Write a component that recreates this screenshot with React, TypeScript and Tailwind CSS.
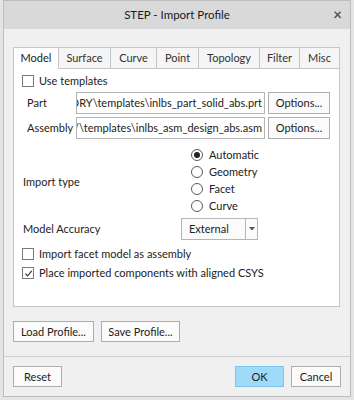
import React from 'react';

const tabs = ['Model', 'Surface', 'Curve', 'Point', 'Topology', 'Filter', 'Misc'];
const tabWidths = ['w-[46px]', 'w-[52px]', 'w-[46px]', 'w-[42px]', 'w-[61px]', 'w-[40px]', 'w-[40px]'];

const Checkbox = ({ checked }: { checked?: boolean }) => (
  <span className="w-[12px] h-[12px] border border-[#7a7a7a] bg-white flex items-center justify-center shrink-0">
    {checked && (
      <svg viewBox="0 0 10 10" className="w-[9px] h-[9px]">
        <path d="M1.5 5.2 L4 7.6 L8.6 2.2" fill="none" stroke="#333" strokeWidth="1.3" />
      </svg>
    )}
  </span>
);

const Radio = ({ checked }: { checked?: boolean }) => (
  <span className="w-[12px] h-[12px] rounded-full border border-[#5a5a5a] bg-white flex items-center justify-center shrink-0">
    {checked && <span className="w-[6px] h-[6px] rounded-full bg-[#222]" />}
  </span>
);

const Button = ({ children, className = '' }: { children: React.ReactNode; className?: string }) => (
  <div
    className={`h-[21px] shrink-0 border border-[#adadad] bg-[#fbfbfb] flex items-center justify-center text-[#222] ${className}`}
  >
    {children}
  </div>
);

export default function App() {
  return (
    <div
      className="w-[354px] h-[400px] bg-[#e4e4e4] pl-[3px] pr-[3px] text-[11px] leading-[14px] text-[#222]"
      style={{ fontFamily: 'Lato, "Open Sans", sans-serif' }}
    >
      <div className="w-[348px] h-[397px] border border-[#bdbdbd] bg-[#f0f0f0] flex flex-col">
        {/* title bar */}
        <div className="h-[28px] bg-[#d9d9d9] relative flex items-center justify-center text-[11.5px] text-[#1a1a1a]">
          <span>STEP - Import Profile</span>
          <span className="absolute right-[8px] top-[6px] text-[15px] text-[#555] font-bold">×</span>
        </div>

        <div className="flex-1 px-[9px] pt-[17px] flex flex-col">
          {/* tabs */}
          <div className="flex items-end h-[22px]">
            {tabs.map((t, i) => (
              <div
                key={t}
                className={`${tabWidths[i]} flex items-center justify-center ${
                  i === 0
                    ? 'h-[22px] bg-white border border-b-0 border-[#c6c6c6] relative z-10 -mb-px pb-px'
                    : 'h-[21px] bg-[#f5f5f5] border border-l-0 border-[#c6c6c6] border-b-0 text-[#333]'
                }`}
              >
                {t}
              </div>
            ))}
          </div>
          {/* panel */}
          <div className="w-[327px] h-[239px] bg-white border border-[#c6c6c6] px-[8px] pt-[5px] flex flex-col">
            <div className="flex items-center gap-[5px] h-[14px]">
              <Checkbox />
              <span>Use templates</span>
            </div>
            <div className="flex items-center pl-[5px] h-[22px] mt-[4px]">
              <span className="w-[49px] shrink-0">Part</span>
              <div className="w-[189px] shrink-0 h-[22px] border border-[#b5b5b5] bg-white flex items-center justify-end overflow-hidden whitespace-nowrap pr-[2px]">
                <span>ORY\templates\inlbs_part_solid_abs.prt</span>
              </div>
              <Button className="w-[62px] ml-[3px] h-[22px]">Options...</Button>
            </div>
            <div className="flex items-center pl-[5px] h-[22px] mt-[3px]">
              <span className="w-[49px] shrink-0">Assembly</span>
              <div className="w-[189px] shrink-0 h-[22px] border border-[#b5b5b5] bg-white flex items-center justify-end overflow-hidden whitespace-nowrap pr-[2px]">
                <span>/\templates\inlbs_asm_design_abs.asm</span>
              </div>
              <Button className="w-[62px] ml-[3px] h-[22px]">Options...</Button>
            </div>
            <div className="flex items-center mt-[9px]">
              <span className="w-[169px] pt-[2px] pl-[1px]">Import type</span>
              <div className="flex flex-col gap-[3px]">
                {['Automatic', 'Geometry', 'Facet', 'Curve'].map((r, i) => (
                  <div key={r} className="flex items-center gap-[6px] h-[14px]">
                    <Radio checked={i === 0} />
                    <span>{r}</span>
                  </div>
                ))}
              </div>
            </div>
            <div className="flex items-center mt-[5px] h-[22px]">
              <span className="w-[159px] pl-[1px]">Model Accuracy</span>
              <div className="w-[77px] h-[22px] border border-[#b5b5b5] bg-[#fbfbfb] flex">
                <span className="flex-1 pl-[7px] flex items-center">External</span>
                <span className="w-[12px] border-l border-[#b5b5b5] flex items-center justify-center">
                  <svg viewBox="0 0 6 4" className="w-[6px] h-[4px]">
                    <path d="M0 0 L6 0 L3 3.5 Z" fill="#555" />
                  </svg>
                </span>
              </div>
            </div>
            <div className="flex items-center gap-[5px] mt-[7px] h-[14px]">
              <Checkbox />
              <span>Import facet model as assembly</span>
            </div>
            <div className="flex items-center gap-[5px] mt-[5px] h-[14px]">
              <Checkbox checked />
              <span>Place imported components with aligned CSYS</span>
            </div>
          </div>

          {/* profile buttons */}
          <div className="flex gap-[7px] mt-[14px]">
            <Button className="w-[81px]">Load Profile...</Button>
            <Button className="w-[79px]">Save Profile...</Button>
          </div>
        </div>

        <div className="border-t border-[#d0d0d0] h-[40px] px-[9px] flex items-center">
          <Button className="w-[49px]">Reset</Button>
          <div className="flex-1" />
          <div className="w-[49px] h-[21px] border border-[#80c4ea] bg-[#9fdbf9] flex items-center justify-center">OK</div>
          <Button className="w-[50px] ml-[7px]">Cancel</Button>
        </div>
      </div>
    </div>
  );
}
